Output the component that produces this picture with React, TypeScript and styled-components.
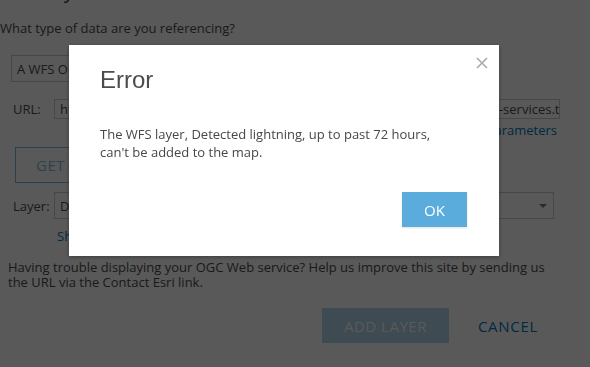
import React from 'react'
import styled, { createGlobalStyle } from 'styled-components'

const GlobalStyle = createGlobalStyle`
    html, body {
        margin: 0;
        padding: 0;
        background: #fff;
    }
    body {
        font-family: 'Open Sans', 'Liberation Sans', sans-serif;
        font-size: 13px;
        color: #4c4c4c;
        overflow: hidden;
    }
`

const Page = styled.main`
    height: 367px;
    overflow: hidden;
`

const Heading = styled.h2`
    margin: -21px 0 0 0;
    font-size: 20px;
    line-height: 24px;
    font-weight: 400;
    color: #323232;
`

const Question = styled.p`
    margin: 16px 0 0 0;
    line-height: 18px;
`

const Form = styled.div`
    display: flex;
    flex-direction: column;
    padding: 0 28px 0 11px;
`

const Box = styled.div<{ $w: number; $h: number }>`
    display: flex;
    align-items: center;
    box-sizing: border-box;
    width: ${(p) => p.$w}px;
    height: ${(p) => p.$h}px;
    border: 1px solid #cbcbcb;
    background: #fff;
    padding: 0 5px;
    white-space: nowrap;
    overflow: hidden;
    position: relative;
`

const Row = styled.div<{ $top: number }>`
    display: flex;
    align-items: center;
    margin-top: ${(p) => p.$top}px;
`

const Label = styled.span`
    width: 43px;
    padding-left: 2px;
    box-sizing: border-box;
    flex: none;
`

const Caret = styled.span`
    position: absolute;
    right: 6px;
    top: 11px;
    border-left: 4px solid transparent;
    border-right: 4px solid transparent;
    border-top: 4px solid #777;
`

const LinkRow = styled.div`
    display: flex;
    justify-content: flex-end;
    margin-top: 2px;
    padding-right: 5px;
    line-height: 18px;
`

const TextLink = styled.a<{ $indent?: number }>`
    color: #0079c1;
    text-decoration: none;
    line-height: 18px;
    margin-left: ${(p) => p.$indent || 0}px;
`

const Button = styled.button<{ $filled?: boolean; $fade: number }>`
    box-sizing: border-box;
    height: 36px;
    padding: 0 20px;
    border: 1px solid #0079c1;
    background: ${(p) => (p.$filled ? '#0079c1' : '#fff')};
    color: ${(p) => (p.$filled ? '#fff' : '#0079c1')};
    font-family: 'Open Sans', sans-serif;
    font-size: 15px;
    letter-spacing: 0.5px;
    opacity: ${(p) => p.$fade};
`

const GetButton = styled(Button)`
    width: 130px;
    margin: 8px 0 0 4px;
    align-self: flex-start;
`

const Help = styled.p`
    margin: 15px 0 0 8px;
    width: 550px;
    line-height: 15px;
`

const Footer = styled.div`
    display: flex;
    justify-content: flex-end;
    align-items: center;
    gap: 11px;
    margin-top: 18px;
    padding-right: 34px;
`

const AddButton = styled(Button)`
    width: 127px;
    height: 35px;
    border-color: #0079c1;
`

const CancelButton = styled.button`
    border: 0;
    background: none;
    color: #0079c1;
    font-family: 'Open Sans', sans-serif;
    font-size: 15px;
    letter-spacing: 0.7px;
    padding: 0 18px;
    height: 35px;
`

const Overlay = styled.div`
    position: fixed;
    inset: 0;
    background: rgba(0, 0, 0, 0.65);
`

const Dialog = styled.div`
    position: absolute;
    left: 69px;
    top: 45px;
    width: 430px;
    box-sizing: border-box;
    padding: 20px 32px 29px 31px;
    background: #fff;
    box-shadow: 0 1px 4px rgba(0, 0, 0, 0.35);
    display: flex;
    flex-direction: column;
`

const DialogTitle = styled.h3`
    margin: 0;
    font-family: 'Liberation Sans', Arial, sans-serif;
    font-size: 24px;
    line-height: 29px;
    font-weight: 400;
    color: #4c4c4c;
`

const CloseButton = styled.button`
    position: absolute;
    top: 12px;
    right: 11px;
    width: 12px;
    height: 12px;
    padding: 0;
    border: 0;
    background: none;
    display: flex;
`

const Message = styled.p`
    margin: 31px 0 0 0;
    width: 350px;
    line-height: 18px;
    color: #474747;
`

const DialogFooter = styled.div`
    display: flex;
    justify-content: flex-end;
    margin-top: 31px;
`

const OkButton = styled.button`
    width: 65px;
    height: 35px;
    border: 0;
    background: #5aacdc;
    color: #fff;
    font-family: 'Open Sans', sans-serif;
    font-size: 15px;
    box-shadow: 0 1px 2px rgba(0, 0, 0, 0.12);
`

const App: React.FC = () => {
    return (
        <>
            <GlobalStyle />
            <Page>
                <Heading>Add Layer from Web</Heading>
                <Question>What type of data are you referencing?</Question>

                <Form>
                    <Row $top={18}>
                        <Box $w={400} $h={27}>A WFS OGC Web Service</Box>
                    </Row>

                    <Row $top={17}>
                        <Label>URL:</Label>
                        <Box $w={506} $h={20}>
                            https://wfs.lightning-example.gov/geoserver/nl/data/ows/lightning/strike-services.tstgis.net/wfs
                        </Box>
                    </Row>

                    <LinkRow>
                        <TextLink href="#">Add custom parameters</TextLink>
                    </LinkRow>

                    <GetButton $fade={0.5}>GET LAYERS</GetButton>

                    <Row $top={9}>
                        <Label>Layer:</Label>
                        <Box $w={500} $h={27}>
                            Detected lightning, up to past 72 hours
                            <Caret />
                        </Box>
                    </Row>

                    <Row $top={8}>
                        <TextLink href="#" $indent={46}>
                            Show layer details
                        </TextLink>
                    </Row>
                </Form>

                <Help>
                    Having trouble displaying your OGC Web service? Help us
                    improve this site by sending us the URL via the Contact
                    Esri link.
                </Help>

                <Footer>
                    <AddButton $filled $fade={0.3}>
                        ADD LAYER
                    </AddButton>
                    <CancelButton>CANCEL</CancelButton>
                </Footer>
            </Page>

            <Overlay>
                <Dialog>
                    <CloseButton aria-label="Close">
                        <svg width="12" height="12" viewBox="0 0 12 12">
                            <path
                                d="M1 1 L11 11 M11 1 L1 11"
                                stroke="#aaa"
                                strokeWidth="1.6"
                            />
                        </svg>
                    </CloseButton>
                    <DialogTitle>Error</DialogTitle>
                    <Message>
                        The WFS layer, Detected lightning, up to past 72 hours,
                        can't be added to the map.
                    </Message>
                    <DialogFooter>
                        <OkButton>OK</OkButton>
                    </DialogFooter>
                </Dialog>
            </Overlay>
        </>
    )
}

export default App
